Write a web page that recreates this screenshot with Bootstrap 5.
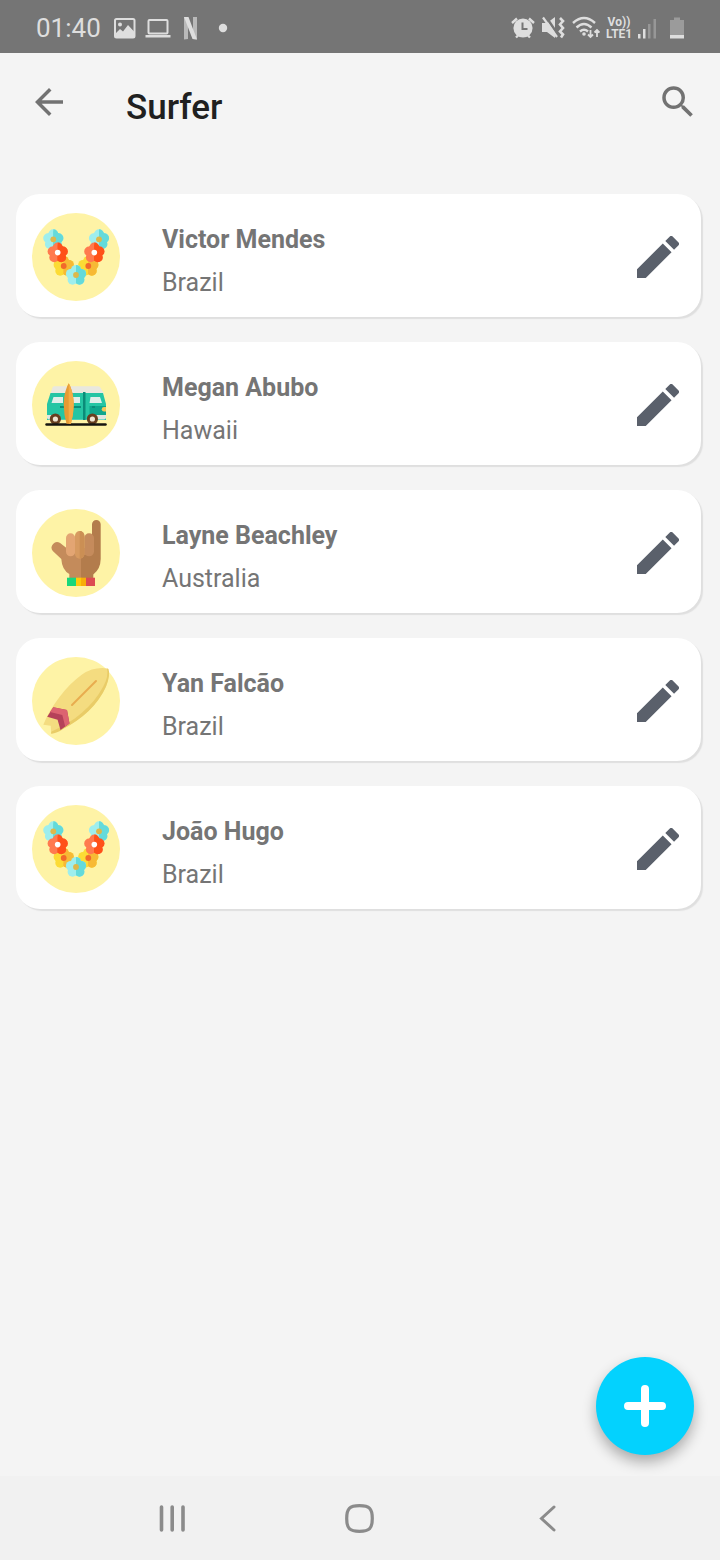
<!DOCTYPE html>
<html lang="en">
<head>
<meta charset="utf-8">
<meta name="viewport" content="width=device-width, initial-scale=1">
<title>Surfer</title>
<link href="https://cdn.jsdelivr.net/npm/bootstrap@5.3.0/dist/css/bootstrap.min.css" rel="stylesheet">
<style>
body { background: #f4f4f4; font-family: Roboto, "Noto Sans", sans-serif; color: #757575; }
svg { display: block; flex: none; }
.status-bar { background: #757575; color: #dedede; height: 53px; padding: 2px 34px 0 36px; }
.status-icons { gap: 6px; }
.status-left { gap: 8px; }
.clock { font-size: 26px; line-height: 32px; }
.volte { font-size: 12px; line-height: 12px; font-weight: 700; width: 26px; }
.app-bar { padding: 28px 21px 65px 28px; }
.icon-btn { background: none; border: 0; padding: 0; color: #727272; }
.app-title { font-size: 35px; line-height: 42px; font-weight: 500; color: #202020; margin-left: 56px; padding-top: 6px; }
.surfer-list { padding: 0 19px 0 16px; gap: 25px; }
.surfer-item { background: #fff; border-radius: 24px; box-shadow: 2px 2px 1px #dfdfdf; padding: 16px 22px 13px 16px; }
.surfer-text { margin-left: 42px; padding-top: 8px; }
.surfer-name { font-size: 25px; line-height: 43px; font-weight: 700; }
.surfer-place { font-size: 25px; line-height: 43px; }
.fab { width: 98px; height: 98px; background: #03d2fe; box-shadow: 0 7px 14px rgba(0,0,0,.3); margin: 0 26px 21px 0; }
.sys-nav { background: #f1f1f1; padding: 0 78px; height: 84px; color: #8b8b8b; }
.sys-nav .icon-btn { color: inherit; }
</style>
</head>
<body>
<svg width="0" height="0" class="position-absolute" aria-hidden="true">
  <defs>
    <g id="petals"><circle cx="0" cy="-5.2" r="4.900"/><circle cx="5.200" cy="-1.200" r="4.900"/><circle cx="3.500" cy="4.800" r="4.900"/><circle cx="-3.500" cy="4.800" r="4.900"/><circle cx="-5.200" cy="-1.200" r="4.900"/><circle r="8"/></g>
    <clipPath id="half"><rect x="0" y="-12" width="12" height="24"/></clipPath>
    <g id="blueFlower"><use href="#petals" fill="#9eeeed"/><g clip-path="url(#half)"><use href="#petals" fill="#64dada"/></g><circle r="2.900" fill="#ddb84b"/></g>
    <g id="redFlower"><use href="#petals" fill="#ff7a4f"/><g clip-path="url(#half)"><use href="#petals" fill="#ff5119"/></g><circle r="2.800" fill="#fff"/></g>
    <g id="goldFlower"><use href="#petals" fill="#fcdb35"/><g clip-path="url(#half)"><use href="#petals" fill="#f7b935"/></g><circle r="2.900" fill="#f2692a"/></g>
    <symbol id="lei" viewBox="0 0 88 88">
      <circle cx="44" cy="44" r="44" fill="#fef3a6"/>
      <use href="#blueFlower" x="21.3" y="26.3"/><use href="#blueFlower" x="67" y="26.3"/>
      <use href="#goldFlower" x="31.7" y="53"/><use href="#goldFlower" x="56.3" y="53"/>
      <use href="#redFlower" x="25.7" y="39.6"/><use href="#redFlower" x="62.3" y="39.6"/>
      <use href="#blueFlower" x="44" y="62"/>
    </symbol>
    <symbol id="van" viewBox="0 0 88 88">
      <circle cx="44" cy="44" r="44" fill="#fef3a6"/>
      <path d="M18.500 32.500l2-6q.5-1.300 2-1.300h43.500q1.500 0 2.300 1.300l3.700 6z" fill="#e9e8df"/>
      <path d="M18.500 32H71l3 11v16H15V43z" fill="#25c5a4"/>
      <path d="M57.500 45H74v12H57.500z" fill="#0fa68c"/>
      <path d="M21.500 36H31v6H19.500zM41 36h7v6h-7zM58.500 36H68l2 6H57.500z" fill="#e0eeea"/>
      <path d="M15 54h59v2.500q0 2-2 2H17q-2 0-2-2z" fill="#e0e5df"/>
      <path d="M28 54h33v4.500H28z" fill="#25c5a4"/>
      <path d="M28 45h4v2h-4zM41 45h8v2h-8zM60 45h3v2h-3z" fill="#0b8c79"/>
      <path d="M74 46v4.500h-2a2.200 2.200 0 010-4.500z" fill="#f3c85b"/>
      <path d="M51 31h2.500v28H51z" fill="#0b8c79"/>
      <circle cx="23.400" cy="58" r="4.100" fill="#efe4d2" stroke="#683f20" stroke-width="3"/>
      <circle cx="60.400" cy="58" r="4.100" fill="#efe4d2" stroke="#683f20" stroke-width="3"/>
      <path d="M14.500 63.400h59" stroke="#161510" stroke-width="2.500" stroke-linecap="round"/>
      <path d="M36.700 22.300C33 29 31.500 38 31.800 45q.2 10 2.700 17.700h4.400Q41.400 55 41.700 45C42 38 40.500 29 36.700 22.300z" fill="#e59a33"/>
      <path d="M36.700 22.300v40.400h2.200Q41.400 55 41.700 45C42 38 40.500 29 36.700 22.300z" fill="#f4ad45"/>
    </symbol>
    <symbol id="shaka" viewBox="0 0 88 88">
      <circle cx="44" cy="44" r="44" fill="#fef3a6"/>
      <path d="M29.300 50L20.800 42a5.500 5.500 0 017.300-8L34.500 39H60V69H37.300V65Q30 61 29.300 50z" fill="#c48b5b"/>
      <path d="M49 46h11V15.300a4.350 4.350 0 018.700 0V50Q68.500 60 61.300 65.500V69H49z" fill="#b37c4c"/>
      <rect x="34" y="24.300" width="9.200" height="23" rx="4.600" fill="#e3a573"/>
      <rect x="52.200" y="24.300" width="9.800" height="23" rx="4.800" fill="#c58b5c"/>
      <rect x="43" y="22" width="9.400" height="27.700" rx="4.700" fill="#d79a60"/>
      <path d="M47.700 22a4.700 4.700 0 014.700 4.700V45a4.700 4.700 0 01-4.700 4.700z" fill="#cb8f54"/>
      <path d="M35 68.700h9v8.300h-9z" fill="#18d77b"/><path d="M44 68.700h5.500v8.300H44z" fill="#fccb0b"/><path d="M49 68.700h5v8.300h-5z" fill="#f8ad09"/><path d="M54 68.700h9v8.300h-9z" fill="#dc4b51"/>
    </symbol>
    <symbol id="board" viewBox="0 0 88 88">
      <circle cx="44" cy="44" r="44" fill="#fef3a6"/>
      <path d="M75.500 11.500Q79 18 74 29.500C65 49 45 68 19.300 76.700L18.700 68.700L11.300 67.700C19 49 34 29 50 17.500Q62 9.500 75.500 11.500z" fill="#f4dc80"/>
      <path d="M75 11.500Q77 19 71 30C60 50 43 64 19.200 74.700V76.700Q25 76.300 31 72C50 62 66 48 74 29.500Q78.500 18 76.500 12z" fill="#e9cc67"/>
      <path d="M21.300 50.300L35 53L37.500 66.500L28.500 73L25.600 62.700L15.200 59.700z" fill="#b54159"/>
      <path d="M21.300 50.300L35 53L37.500 66.500L33.200 69.500L30.300 58L18 55z" fill="#dc6370"/>
      <path d="M40 48L64 24" stroke="#e8ac4f" stroke-width="2" stroke-linecap="round"/>
    </symbol>
    <symbol id="pencil" viewBox="3 3 18 18"><path fill="#5a606b" d="M3 17.250V21h3.750L17.810 9.940l-3.750-3.750L3 17.250zM20.710 7.040a.996.996 0 000-1.410l-2.340-2.340a.996.996 0 00-1.410 0l-1.830 1.830 3.750 3.750 1.830-1.830z"/></symbol>
  </defs>
</svg>

<div class="d-flex flex-column min-vh-100">
  <div class="status-bar d-flex align-items-center justify-content-between">
    <div class="status-left d-flex align-items-center">
      <span class="clock">01:40</span>
      <svg width="27" height="24" viewBox="0 0 27 24"><rect x="6" y="3" width="19.500" height="18.500" rx="1.500" fill="none" stroke="currentColor" stroke-width="2"/><circle cx="11" cy="8.500" r="2" fill="currentColor"/><path d="M6 18l5-5 3 2.500L19 9l6.500 7v5.500H6z" fill="currentColor"/></svg>
      <svg width="28" height="24" viewBox="0 0 28 24"><rect x="4.500" y="4" width="19" height="13.500" rx="1" fill="none" stroke="currentColor" stroke-width="2"/><path d="M1.500 19h25v2.500h-25z" fill="currentColor"/></svg>
      <svg width="22" height="24" viewBox="0 0 22 24"><path d="M4 1h4v22l-4 .5zM13 1h4v22.500L13 23z" fill="#b9b9b9"/><path d="M4 1h4.500L17 23.500 12.500 23z" fill="currentColor"/></svg>
      <svg width="24" height="24" viewBox="0 0 24 24"><circle cx="13" cy="12" r="4.200" fill="currentColor"/></svg>
    </div>
    <div class="status-icons d-flex align-items-center">
      <svg width="26" height="24" viewBox="0 0 26 24"><path d="M2 7l5-4.500M24 7l-5-4.500M6 21.500l3-3M20 21.500l-3-3" stroke="currentColor" stroke-width="2.400"/><circle cx="13" cy="12" r="9.600" fill="currentColor"/><path d="M12.500 6.500V13h5" fill="none" stroke="#757575" stroke-width="2"/></svg>
      <svg width="24" height="24" viewBox="0 0 24 24"><path d="M0 7h5l8-6v21l-8-6H0z" fill="currentColor"/><path d="M3.500 0l12 18" stroke="#757575" stroke-width="2.500"/><path d="M1 1.500l14 19.500" stroke="currentColor" stroke-width="2.200"/><path d="M18 2l3 3-3 3.500 3 3.500-3 3.500 3 3-2 3" fill="none" stroke="currentColor" stroke-width="2.600"/></svg>
      <svg width="28" height="24" viewBox="0 0 28 24" fill="none" stroke="currentColor" stroke-width="2.400"><path d="M1 7Q12 -3 23 7M4.500 11.500Q12 4.500 19.500 11.500M8 15.500q4-3.500 8 0"/><circle cx="12" cy="18" r="1.800" fill="currentColor" stroke="none"/><path d="M18.500 14v7M16 18.500l2.500 2.500 2.500-2.500M25 21v-7M22.500 16.500L25 14l2.500 2.500" stroke-width="1.800"/></svg>
      <div class="volte text-center">Vo))<br>LTE1</div>
      <svg width="18" height="24" viewBox="0 0 18 24"><path d="M0 18h2.500v4.500H0zM5 13h2.500v9.500H5z" fill="currentColor"/><path d="M10 8h2.500v14.500H10zM15.500 3H18v19.500h-2.500z" fill="#979797"/></svg>
      <svg width="24" height="24" viewBox="0 0 24 24"><path d="M8 4h4V1.500h6V4h4v16H8z" fill="#9b9b9b"/><path d="M8 19h14v3.500H8z" fill="currentColor"/></svg>
    </div>
  </div>

  <header class="app-bar d-flex align-items-start">
    <button type="button" class="icon-btn" aria-label="Back"><svg width="42" height="42" viewBox="0 0 24 24" fill="currentColor"><path d="M20 11H7.830l5.590-5.590L12 4l-8 8 8 8 1.410-1.410L7.830 13H20v-2z"/></svg></button>
    <h1 class="app-title mb-0">Surfer</h1>
    <button type="button" class="icon-btn ms-auto" aria-label="Search"><svg width="42" height="42" viewBox="0 0 24 24" fill="currentColor"><path d="M15.500 14h-.79l-.28-.27A6.471 6.471 0 0016 9.500 6.500 6.500 0 109.500 16c1.610 0 3.090-.59 4.230-1.570l.27.28v.79l5 4.990L20.490 19l-4.990-5zm-6 0C7.010 14 5 11.990 5 9.500S7.010 5 9.500 5 14 7.010 14 9.500 11.990 14 9.500 14z"/></svg></button>
  </header>

  <main class="d-flex flex-column flex-grow-1">
    <ul class="surfer-list list-unstyled d-flex flex-column mb-4">
      <li class="surfer-item d-flex align-items-center">
        <svg width="88" height="88"><use href="#lei"/></svg>
        <div class="surfer-text flex-grow-1"><div class="surfer-name">Victor Mendes</div><div class="surfer-place">Brazil</div></div>
        <button type="button" class="icon-btn" aria-label="Edit Victor Mendes"><svg width="42" height="42"><use href="#pencil"/></svg></button>
      </li>
      <li class="surfer-item d-flex align-items-center">
        <svg width="88" height="88"><use href="#van"/></svg>
        <div class="surfer-text flex-grow-1"><div class="surfer-name">Megan Abubo</div><div class="surfer-place">Hawaii</div></div>
        <button type="button" class="icon-btn" aria-label="Edit Megan Abubo"><svg width="42" height="42"><use href="#pencil"/></svg></button>
      </li>
      <li class="surfer-item d-flex align-items-center">
        <svg width="88" height="88"><use href="#shaka"/></svg>
        <div class="surfer-text flex-grow-1"><div class="surfer-name">Layne Beachley</div><div class="surfer-place">Australia</div></div>
        <button type="button" class="icon-btn" aria-label="Edit Layne Beachley"><svg width="42" height="42"><use href="#pencil"/></svg></button>
      </li>
      <li class="surfer-item d-flex align-items-center">
        <svg width="88" height="88"><use href="#board"/></svg>
        <div class="surfer-text flex-grow-1"><div class="surfer-name">Yan Falcão</div><div class="surfer-place">Brazil</div></div>
        <button type="button" class="icon-btn" aria-label="Edit Yan Falcão"><svg width="42" height="42"><use href="#pencil"/></svg></button>
      </li>
      <li class="surfer-item d-flex align-items-center">
        <svg width="88" height="88"><use href="#lei"/></svg>
        <div class="surfer-text flex-grow-1"><div class="surfer-name">João Hugo</div><div class="surfer-place">Brazil</div></div>
        <button type="button" class="icon-btn" aria-label="Edit João Hugo"><svg width="42" height="42"><use href="#pencil"/></svg></button>
      </li>
    </ul>
    <button type="button" class="fab border-0 rounded-circle d-flex align-items-center justify-content-center mt-auto ms-auto" aria-label="Add surfer"><svg width="42" height="42" viewBox="0 0 42 42"><path d="M21 4v34M4 21h34" stroke="#fff" stroke-width="8" stroke-linecap="round"/></svg></button>
  </main>

  <nav class="sys-nav row g-0 align-items-center" aria-label="System">
    <button type="button" class="icon-btn col d-flex justify-content-center" aria-label="Recent apps"><svg width="32" height="32" viewBox="0 0 32 32" stroke="currentColor" stroke-width="3.600" stroke-linecap="round"><path d="M5.500 5v23M16.200 5v23M27 5v23"/></svg></button>
    <button type="button" class="icon-btn col d-flex justify-content-center" aria-label="Home"><svg width="32" height="32" viewBox="0 0 32 32" fill="none" stroke="currentColor" stroke-width="3.200"><path d="M15.500 3.700C25.500 3.700 28.300 6.500 28.300 16.500S25.500 29.300 15.500 29.300 2.700 26.500 2.700 16.500 5.500 3.700 15.500 3.700z"/></svg></button>
    <button type="button" class="icon-btn col d-flex justify-content-center" aria-label="Back"><svg width="32" height="32" viewBox="0 0 32 32" fill="none" stroke="currentColor" stroke-width="3" stroke-linecap="round"><path d="M22 5L9.500 16.500 22 28"/></svg></button>
  </nav>
</div>
<script src="https://cdn.jsdelivr.net/npm/bootstrap@5.3.0/dist/js/bootstrap.bundle.min.js"></script>
</body>
</html>
